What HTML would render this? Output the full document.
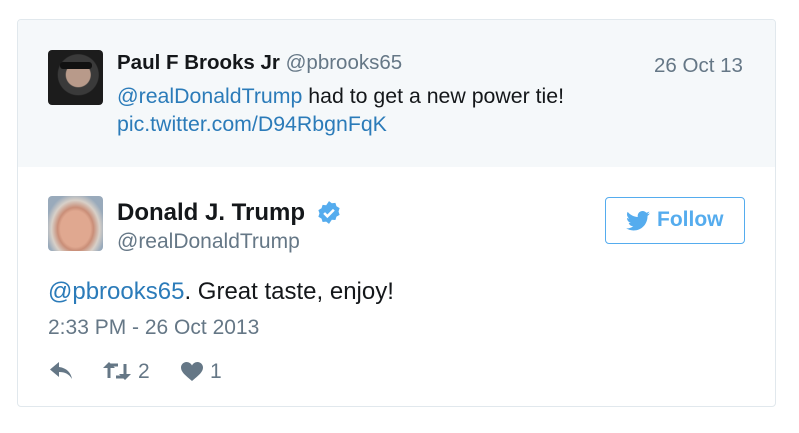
<!DOCTYPE html>
<html><head><style>
body{margin:0;width:799px;height:433px;background:#fff;font-family:"Liberation Sans",Arial,sans-serif;position:relative;overflow:hidden}
.card{position:absolute;left:17px;top:19px;width:759px;height:388px;border:1px solid #e1e8ed;border-radius:4px;overflow:hidden;box-sizing:border-box}
.top{position:absolute;left:0;top:0;width:100%;height:147px;background:#f5f8fa}
.a{position:absolute;color:#14171a;white-space:nowrap}
.blue{color:#2b7bb9}
.grey{color:#657786}
.av{position:absolute;width:55px;height:55px;border-radius:4px}
</style></head><body>
<div class="card"><div class="top"></div></div>
<div class="av" style="left:48px;top:50px;background:radial-gradient(circle at 55% 45%,#b89a8a 0 12px,#3a3a3a 13px 20px,#1c1c1c 21px)"></div>
<div style="position:absolute;left:60px;top:62px;width:32px;height:7px;background:#111;border-radius:3px"></div>
<div class="a" style="left:117px;top:51px;font-size:20.5px;font-weight:bold">Paul F Brooks Jr <span class="grey" style="font-weight:normal">@pbrooks65</span></div>
<div class="a grey" style="left:654px;top:54px;font-size:20.5px">26 Oct 13</div>
<div class="a" style="left:117px;top:84px;font-size:21.3px"><span class="blue">@realDonaldTrump</span> had to get a new power tie!</div>
<div class="a blue" style="left:117px;top:112px;font-size:21.3px">pic.twitter.com/D94RbgnFqK</div>

<div class="av" style="left:48px;top:196px;background:radial-gradient(ellipse at 50% 60%,#e0a890 0 15px,#c98e78 18px,#d8d0c8 24px,#9ab 30px)"></div>
<div class="a" style="left:117px;top:199px;font-size:24px;font-weight:bold">Donald J. Trump</div>
<svg style="position:absolute;left:316px;top:200px" width="26" height="26" viewBox="0 0 24 24"><path fill="#55acee" d="M12 1l2.6 2 3.3-.3 1 3.1 2.9 1.7-1 3.1 1 3.1-2.9 1.7-1 3.1-3.3-.3L12 22l-2.6-2-3.3.3-1-3.1L2.2 15.5l1-3.1-1-3.1L5.1 7.6l1-3.1 3.3.3z"/><path d="M7.5 12l3 3 6-6" stroke="#fff" stroke-width="2.4" fill="none"/></svg>
<div class="a grey" style="left:117px;top:230px;font-size:21px">@realDonaldTrump</div>
<div style="position:absolute;left:605px;top:197px;width:140px;height:47px;border:1px solid #55acee;border-radius:4px;box-sizing:border-box"></div>
<svg style="position:absolute;left:626px;top:211px" width="24" height="20" viewBox="0 0 24 20"><path fill="#55acee" d="M24 2.4c-.9.4-1.8.6-2.8.8 1-.6 1.8-1.6 2.2-2.7-1 .6-2 1-3.1 1.2C19.4.7 18.1 0 16.6 0c-2.7 0-4.9 2.2-4.9 4.9 0 .4 0 .8.1 1.1C7.7 5.8 4.1 3.9 1.7.9c-.4.7-.7 1.6-.7 2.5 0 1.7.9 3.2 2.2 4.1-.8 0-1.6-.2-2.2-.6v.1c0 2.4 1.7 4.4 3.9 4.8-.4.1-.8.2-1.3.2-.3 0-.6 0-.9-.1.6 2 2.4 3.4 4.6 3.4-1.7 1.3-3.8 2.1-6.1 2.1-.4 0-.8 0-1.2-.1 2.2 1.4 4.8 2.2 7.5 2.2 9.1 0 14-7.5 14-14v-.6c1-.7 1.8-1.6 2.5-2.5z"/></svg>
<div class="a" style="left:657px;top:208px;font-size:21px;font-weight:bold;color:#55acee">Follow</div>
<div class="a" style="left:48px;top:278px;font-size:24px"><span class="blue">@pbrooks65</span>. Great taste, enjoy!</div>
<div class="a grey" style="left:48px;top:316px;font-size:21px">2:33 PM - 26 Oct 2013</div>
<svg style="position:absolute;left:50px;top:362px" width="24" height="18" viewBox="0 0 24 18"><path fill="#657786" d="M9 0L0 7.5 9 15V10c6 0 10 2 13 7-1-6-5-11-13-12z"/></svg>
<svg style="position:absolute;left:103px;top:362px" width="28" height="18" viewBox="0 0 28 18"><g fill="none" stroke="#657786" stroke-width="3"><path d="M6 16V3h9"/><path d="M22 2v13h-9"/></g><path fill="#657786" d="M0 6l6-6 6 6zM16 12h12l-6 6z"/></svg>
<div class="a grey" style="left:138px;top:360px;font-size:21px">2</div>
<svg style="position:absolute;left:181px;top:362px" width="22" height="19" viewBox="0 0 22 19"><path fill="#657786" d="M11 19C4 13 0 10 0 5.5 0 2.5 2.5 0 5.5 0 8 0 10 1.5 11 3.5 12 1.5 14 0 16.5 0 19.5 0 22 2.5 22 5.5 22 10 18 13 11 19z"/></svg>
<div class="a grey" style="left:210px;top:360px;font-size:21px">1</div>
</body></html>
